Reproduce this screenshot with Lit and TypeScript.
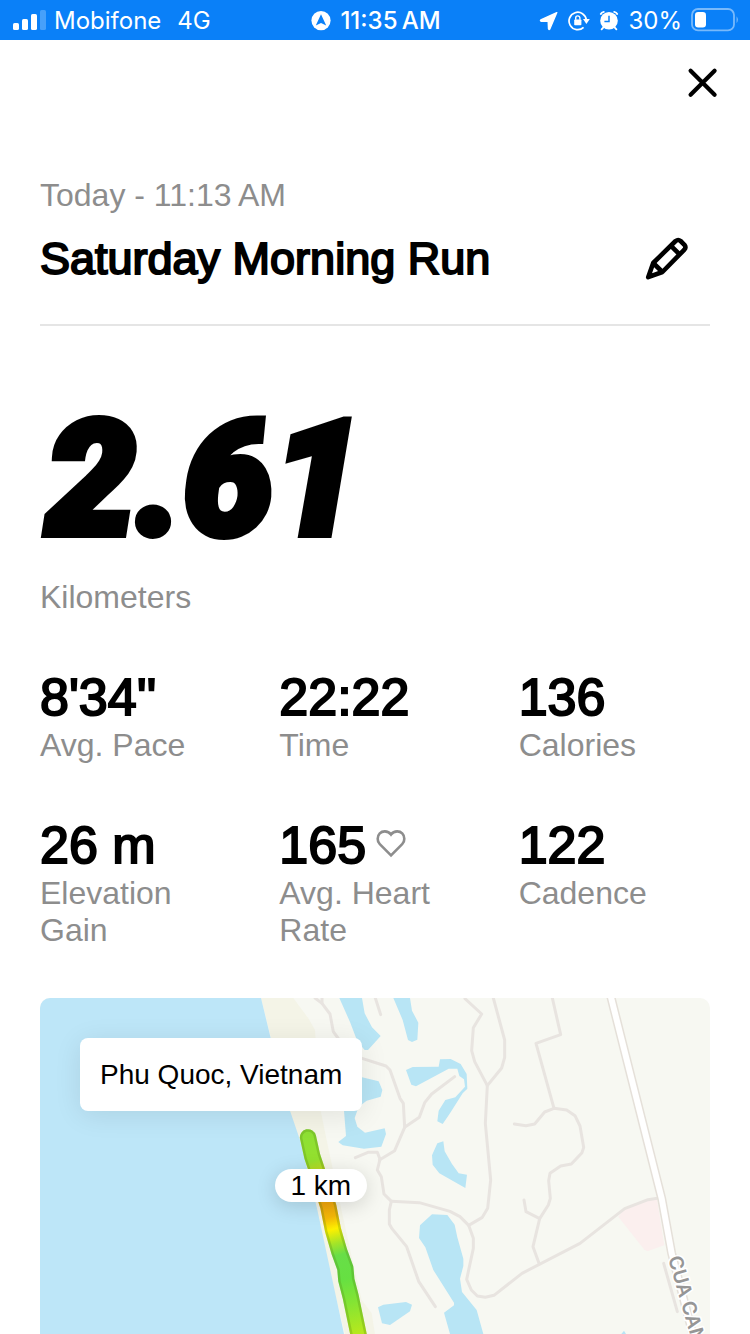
import { LitElement, html, svg, css, nothing } from "lit";
import { customElement, property } from "lit/decorators.js";

interface Stat {
  value: string;
  label: string;
  heart?: boolean;
}

const STATS: Stat[] = [
  { value: "8'34''", label: "Avg. Pace" },
  { value: "22:22", label: "Time" },
  { value: "136", label: "Calories" },
  { value: "26 m", label: "Elevation Gain" },
  { value: "165", label: "Avg. Heart Rate", heart: true },
  { value: "122", label: "Cadence" },
];

@customElement("status-bar")
class StatusBar extends LitElement {
  static styles = css`
    :host {
      display: grid;
      grid-template-columns: 1fr auto 1fr;
      align-items: center;
      box-sizing: border-box;
      height: 40px;
      padding: 2px 11px 0 13px;
      background: #0a80f8;
      color: #fff;
      font: 400 24px/38px Inter, "Liberation Sans", sans-serif;
    }
    .group {
      display: flex;
      align-items: center;
      gap: 9px;
      white-space: nowrap;
    }
    .carrier {
      gap: 8px;
    }
    .network {
      margin-left: 8px;
    }
    .clock {
      font-weight: 500;
    }
    .right {
      justify-content: flex-end;
    }
    svg {
      display: block;
      flex: none;
    }
  `;

  render() {
    return html`
      <div class="group carrier">
        <svg width="33" height="22" viewBox="0 0 33 22" fill="#fff" aria-hidden="true">
          <rect x="0" y="13" width="6" height="7" rx="1.6" />
          <rect x="9" y="9" width="6" height="11" rx="1.6" />
          <rect x="18" y="4" width="6" height="16" rx="1.6" />
          <rect x="27" y="0" width="6" height="20" rx="1.6" opacity=".25" />
        </svg>
        <span>Mobifone</span>
        <span class="network">4G</span>
      </div>
      <div class="group clock">
        <svg width="20" height="20" viewBox="0 0 20 20" aria-hidden="true">
          <circle cx="10" cy="9.6" r="9.6" fill="#fff" />
          <path d="M10 3.2 15.2 14.6 10 12 4.8 14.6Z" fill="#0a80f8" />
        </svg>
        <span>11:35&#x202f;AM</span>
      </div>
      <div class="group right">
        <svg width="20" height="20" viewBox="0 0 20 20" aria-hidden="true">
          <path
            d="M17.8 1.6 1.8 9Q1 9.8 2 10.2L9.2 10.4 9.5 17.8Q10 19 10.8 18Z"
            fill="#fff" stroke="#fff" stroke-width="1.4" stroke-linejoin="round" />
        </svg>
        <svg width="22" height="20" viewBox="0 0 22 20" fill="none" stroke="#fff" stroke-width="1.7" aria-hidden="true">
          <path d="M15.6 16.4A8.7 8.7 0 1 1 18.4 9.1" />
          <path d="M15 8.1H21.8L18.4 12.9Z" fill="#fff" stroke="none" />
          <rect x="6.2" y="8.4" width="7.2" height="5.8" rx=".8" fill="#fff" stroke="none" />
          <path d="M7.7 8.8V7a2.1 2.1 0 0 1 4.2 0V8.8" stroke-width="1.4" />
        </svg>
        <svg width="20" height="20" viewBox="0 0 20 20" fill="none" stroke="#fff" aria-hidden="true">
          <circle cx="10" cy="9.8" r="8.8" fill="#fff" stroke="none" />
          <path d="M1.8 3Q2.6 1.4 4.8 .9M18.2 3Q17.4 1.4 15.2 .9" stroke-width="1.8" stroke-linecap="round" />
          <path d="M4.4 16.4 2.6 18.4M15.6 16.4 17.4 18.4" stroke-width="1.8" stroke-linecap="round" />
          <path d="M10 4.8V10.4H5.4" stroke="#0a80f8" stroke-width="1.5" />
        </svg>
        <span>30%</span>
        <svg width="48" height="26" viewBox="0 0 48 26" aria-hidden="true">
          <rect x="1" y="1" width="42" height="21.4" rx="6" fill="none" stroke="#fff" stroke-opacity=".45" stroke-width="1.8" />
          <rect x="4" y="4" width="11" height="15.4" rx="3.2" fill="#fff" />
          <path d="M45.6 8.2Q48 11.6 45.6 15.2Z" fill="#fff" opacity=".5" />
        </svg>
      </div>
    `;
  }
}

@customElement("run-stat")
class RunStat extends LitElement {
  @property() value = "";
  @property() label = "";
  @property({ type: Boolean }) heart = false;

  static styles = css`
    :host {
      display: block;
    }
    .value {
      display: flex;
      align-items: center;
      gap: 10px;
      font-size: 52px;
      line-height: 60px;
      color: #000;
      -webkit-text-stroke: 2px #000;
    }
    .label {
      font-size: 32px;
      line-height: 37px;
      color: #8d8d8d;
    }
  `;

  render() {
    return html`
      <div class="value">
        <span>${this.value}</span>
        ${this.heart
          ? html`<svg width="30" height="32" viewBox="0 0 30 32" fill="none" stroke="#8d8d8d" stroke-width="2.6" aria-hidden="true">
              <path d="M15 26.4 3.8 15.2A7.2 7.2 0 0 1 1.7 9.8C1.7 5.4 4.8 2.4 8.8 2.4 11.6 2.4 13.6 3.6 15 5.6 16.4 3.6 18.4 2.4 21.2 2.4 25.2 2.4 28.3 5.4 28.3 9.8A7.2 7.2 0 0 1 26.2 15.2Z" />
            </svg>`
          : nothing}
      </div>
      <div class="label">${this.label}</div>
    `;
  }
}

/* Map units are thirds of a CSS pixel at the base width. */
const PATHS = [
  "M195 24 216 40 240 72 250 125 268 150",
  "M216 24V40",
  "M376 24 392 74",
  "M336 205 408 228 420 240 450 325 460 340 464 412",
  "M614 260 545 312 524 338 508 382 464 412 434 482 388 510",
  "M316 503 354 487H382L390 508 382 540 394 560 402 612 424 634 418 660 418 702 426 716 470 770 506 874 556 950",
  "M424 634 508 638 600 664 630 680 656 706 697 682 713 655 722 570 706 400 712 287 674 215 665 182 670 113 695 72 645 26",
  "M730 24 764 150 764 202 755 234 712 287",
  "M656 706 670 745V775L650 868 664 900 682 918 706 922 732 916 816 850 990 760 1124 656 1194 629 1222 625",
  "M907 24 932 134 858 160 912 355",
  "M793 402 828 407 854 402 884 366 912 355 950 360 975 377 990 408 1001 472 996 488 964 522 932 528 900 550 896 572 901 625 895 645 869 686 849 770 867 820",
  "M822 630 828 665 869 686",
  "M1241 820 1282 965",
];

const LAKES = [
  "M268 24H336L344 70 366 112 392 138 354 180H344L322 154 300 96Z",
  "M430 24H480L486 62 505 98 502 149 486 156 474 150 458 90Z",
  "M468 240 488 231 566 230 570 208 602 207 632 222 650 252 652 296 638 310 600 370 578 402 562 394 566 362 586 330 616 322 645 290 642 268 628 258 622 236 596 236 498 289 484 284Z",
  "M330 260 386 274 397 300 392 320 350 332 326 350 314 384 322 410 345 428 404 415 408 432 394 470 342 476 278 466 265 456 288 438 282 362Z",
  "M562 460 580 454 584 484 606 522 626 550 651 554 646 594 568 550 548 524 546 496Z",
  "M546 673 592 675 614 704 622 742 640 806V828L630 866 636 906 680 960 700 1032H600L582 968 612 946V938L550 840 526 772 507 744 510 706Z",
  "M384 952 400 944 468 936 486 944 480 964 420 1005 396 1000Z",
  "M1114 1032 1122 1022 1128 1032Z",
];

const ROAD = "M1080 10 1235 625 1265 790 1333 1050";
const RUN = "M174 442 187 500 202 545 235 650 249 720 268 785 286 835 289 870 302 920 327 1040";

@customElement("route-map")
class RouteMap extends LitElement {
  @property() place = "";

  static styles = css`
    :host {
      display: block;
      position: relative;
      overflow: hidden;
      min-height: 336px;
      border-radius: 10px 10px 0 0;
      background: #f7f8f2;
    }
    .canvas {
      position: absolute;
      inset: 0;
      width: 100%;
      height: 100%;
    }
    .road-name {
      font: 600 58px Inter, "Liberation Sans", sans-serif;
      fill: #969696;
      stroke: #fff;
      stroke-width: 10px;
      stroke-linejoin: round;
      paint-order: stroke;
    }
    .place,
    .marker {
      position: absolute;
      background: #fff;
      color: #000;
      font-size: 28px;
      white-space: nowrap;
    }
    .place {
      left: 40px;
      top: 40px;
      padding: 20px;
      line-height: 33px;
      border-radius: 8px;
      box-shadow: 0 4px 28px rgba(0, 0, 0, 0.09);
    }
    .marker {
      left: 35%;
      top: 171px;
      padding: 0 16px;
      line-height: 33px;
      border-radius: 17px;
      box-shadow: 0 4px 20px rgba(0, 0, 0, 0.15);
    }
  `;

  render() {
    return html`
      <svg class="canvas" viewBox="-630 24 2010 1008" preserveAspectRatio="xMidYMin slice" role="img" aria-label="Route map">
        <defs>
          <linearGradient id="pace" gradientUnits="userSpaceOnUse" x1="174" y1="440" x2="330" y2="1032">
            <stop offset="0" stop-color="#8ee034" />
            <stop offset=".12" stop-color="#94e02e" />
            <stop offset=".2" stop-color="#d2d81c" />
            <stop offset=".34" stop-color="#f2a80c" />
            <stop offset=".41" stop-color="#f4b808" />
            <stop offset=".47" stop-color="#fdf000" />
            <stop offset=".54" stop-color="#a4e428" />
            <stop offset=".6" stop-color="#68de48" />
            <stop offset=".72" stop-color="#66e042" />
            <stop offset=".84" stop-color="#84e434" />
            <stop offset="1" stop-color="#b8e81c" />
          </linearGradient>
        </defs>
        <path fill="#f4f4e7" d="M33 24H130L175 85 195 120 212 362 230 450 270 640 305 800 335 930 365 970 375 1032H285Z" />
        <path fill="#bde6f8" d="M-630 24H33L62 144 120 362 150 450 200 650 282 1032H-630Z" />
        <path fill="#fbefee" d="M1105 680 1124 656 1194 629 1221 627 1243 766 1192 784 1182 778Z" />
        ${LAKES.map((d) => svg`<path fill="#b8e5f5" d=${d} />`)}
        <g fill="none" stroke="#e8e4e0" stroke-width="9" stroke-linejoin="round" stroke-linecap="round">
          ${PATHS.map((d) => svg`<path d=${d} />`)}
        </g>
        <path d=${ROAD} fill="none" stroke="#e5e0d9" stroke-width="27" />
        <path d=${ROAD} fill="none" stroke="#fff" stroke-width="18" />
        <g fill="none" stroke-linejoin="round" stroke-linecap="round">
          <path d=${RUN} stroke="url(#pace)" stroke-width="49" />
          <path d=${RUN} stroke="#4a7a10" stroke-opacity=".25" stroke-width="49" />
          <path d=${RUN} stroke="url(#pace)" stroke-width="34" />
        </g>
        <text class="road-name" transform="translate(1254 804) rotate(74)">CUA CAN</text>
      </svg>
      <div class="place">${this.place}</div>
      <div class="marker">1 km</div>
    `;
  }
}

@customElement("app-root")
class AppRoot extends LitElement {
  static styles = css`
    :host {
      display: flex;
      flex-direction: column;
      box-sizing: border-box;
      height: 100vh;
      overflow: hidden;
      background: #fff;
      color: #000;
      font-family: "Liberation Sans", Arial, sans-serif;
    }
    .toolbar {
      display: flex;
      justify-content: flex-end;
      padding: 20px 24px;
    }
    .icon-button {
      display: block;
      padding: 0;
      border: 0;
      background: none;
      color: #000;
      cursor: pointer;
    }
    .icon-button svg {
      display: block;
    }
    main {
      flex: 1;
      display: flex;
      flex-direction: column;
      padding: 50px 40px 0;
    }
    .date {
      font-size: 32px;
      line-height: 38px;
      color: #8d8d8d;
    }
    .heading {
      display: flex;
      align-items: center;
      justify-content: space-between;
      margin-top: 15px;
      padding: 0 20px 35px 0;
      border-bottom: 2px solid #e5e5e5;
    }
    h1 {
      margin: 0;
      font-size: 45px;
      font-weight: 400;
      line-height: 60px;
      -webkit-text-stroke: 2px #000;
    }
    .distance {
      margin-top: 60px;
      padding-left: 6px;
      font: italic 900 160px/188px Roboto, "Open Sans", sans-serif;
      -webkit-text-stroke: 8px #000;
    }
    .unit {
      margin-top: 4px;
      font-size: 32px;
      line-height: 38px;
      color: #8d8d8d;
    }
    .stats {
      display: grid;
      grid-template-columns: repeat(3, 1fr);
      gap: 51px 48px;
      margin-top: 51px;
    }
    route-map {
      flex: 1;
      margin-top: 49px;
    }
  `;

  render() {
    return html`
      <status-bar></status-bar>
      <div class="toolbar">
        <button class="icon-button" aria-label="Close">
          <svg width="46" height="46" viewBox="0 0 46 46" fill="none" stroke="currentColor" stroke-width="4.2" stroke-linecap="round">
            <path d="M10.6 10.8 34.6 34.8M34.6 10.8 10.6 34.8" />
          </svg>
        </button>
      </div>
      <main>
        <div class="date">Today - 11:13&#x202f;AM</div>
        <div class="heading">
          <h1>Saturday Morning Run</h1>
          <button class="icon-button" aria-label="Edit title">
            <svg width="46" height="46" viewBox="0 0 46 46" fill="none" stroke="currentColor" stroke-width="4.6" stroke-linejoin="round">
              <path d="M4.2 41.2 9.2 27 31.6 5Q34.2 3 36.6 5L40.4 8.8Q42.4 11.2 40.4 13.6L18.4 36Z" />
              <path d="M27 9.8 35.6 18.4M9.2 27 18.4 36" />
              <path d="M6 35 10.6 39.4 4.2 41.2Z" fill="currentColor" stroke="none" />
            </svg>
          </button>
        </div>
        <div class="distance">2.61</div>
        <div class="unit">Kilometers</div>
        <div class="stats">
          ${STATS.map(
            (s) => html`<run-stat .value=${s.value} .label=${s.label} .heart=${!!s.heart}></run-stat>`
          )}
        </div>
        <route-map place="Phu Quoc, Vietnam"></route-map>
      </main>
    `;
  }
}
